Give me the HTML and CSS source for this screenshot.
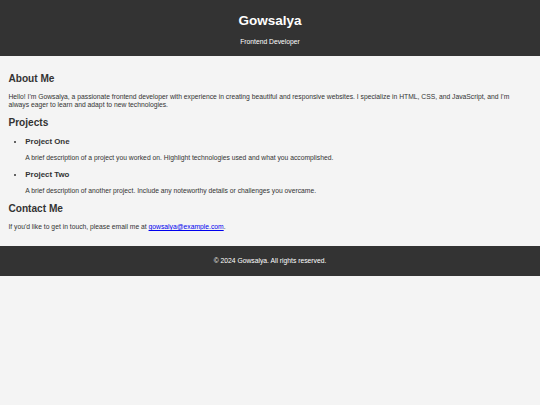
FILE: index.html
```html
<!DOCTYPE html>
<html lang="en">
<head>
<meta charset="utf-8">
<title>Gowsalya - Frontend Developer</title>
<link rel="stylesheet" href="styles.css">
</head>
<body>
<header class="site-header">
  <h1 class="site-title">Gowsalya</h1>
  <p class="site-tagline">Frontend Developer</p>
</header>
<main class="content">
  <section class="about">
    <h2 class="section-title">About Me</h2>
    <p class="text">Hello! I'm Gowsalya, a passionate frontend developer with experience in creating beautiful and responsive websites. I specialize in HTML, CSS, and JavaScript, and I'm always eager to learn and adapt to new technologies.</p>
  </section>
  <section class="projects">
    <h2 class="section-title">Projects</h2>
    <ul class="project-list">
      <li class="project">
        <h3 class="project-title">Project One</h3>
        <p class="text">A brief description of a project you worked on. Highlight technologies used and what you accomplished.</p>
      </li>
      <li class="project">
        <h3 class="project-title">Project Two</h3>
        <p class="text">A brief description of another project. Include any noteworthy details or challenges you overcame.</p>
      </li>
    </ul>
  </section>
  <section class="contact">
    <h2 class="section-title">Contact Me</h2>
    <p class="text">If you'd like to get in touch, please email me at <a class="mail-link" href="mailto:gowsalya@example.com">gowsalya@example.com</a>.</p>
  </section>
</main>
<footer class="site-footer">
  <p class="footer-text">&copy; 2024 Gowsalya. All rights reserved.</p>
</footer>
</body>
</html>
```

FILE: styles.css
```css
body {
  margin: 0;
  padding: 0;
  font-family: "Liberation Sans", Arial, sans-serif;
  font-size: 6.75px;
  line-height: 7.594px;
  background: #f4f4f4;
  color: #333;
}

.site-header {
  background: #333;
  color: #fff;
  text-align: center;
  padding: 4.219px 0;
}

.site-title {
  font-size: 13.5px;
  line-height: 15.61px;
  margin: 9.045px 0;
}

.site-tagline {
  margin: 6.75px 0;
}

.content {
  padding: 8.4375px;
}

.section-title {
  font-size: 10.125px;
  line-height: 11.81px;
  margin: 8.404px 0;
}

.project-list {
  margin: 6.75px 0;
  padding-left: 16.875px;
}

.project-title {
  font-size: 7.897px;
  line-height: 9.28px;
  margin: 7.897px 0;
}

.text {
  margin: 6.75px 0;
}

.mail-link {
  color: #0000ee;
}

.site-footer {
  background: #333;
  color: #fff;
  text-align: center;
  padding: 4.219px 0;
}

.footer-text {
  margin: 6.75px 0;
}
```
